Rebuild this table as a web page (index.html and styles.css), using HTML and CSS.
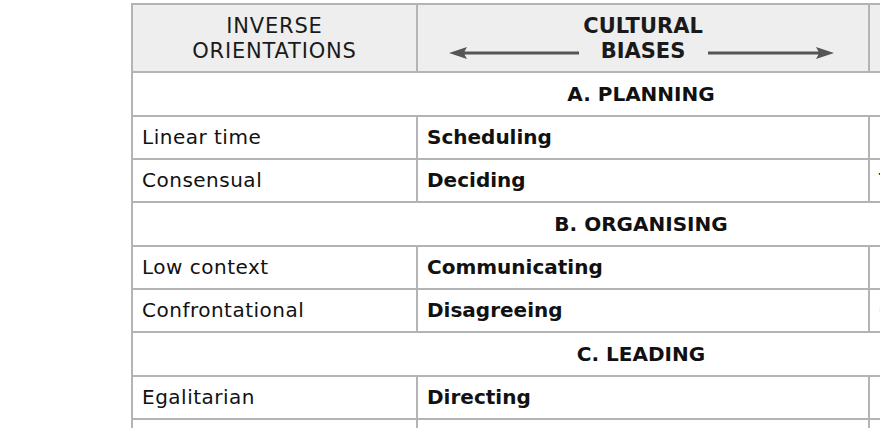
FILE: index.html
```html
<!DOCTYPE html>
<html>
<head>
<meta charset="utf-8">
<link rel="stylesheet" href="styles.css">
</head>
<body>
<div class="wrap">
<table class="grid">
  <colgroup><col class="c1"><col class="c2"><col class="c3"></colgroup>
  <tr class="head">
    <th class="h-inv">INVERSE<br>ORIENTATIONS</th>
    <th class="h-bias">
      <div class="bias">
        <svg class="arrow" width="130" height="12" viewBox="0 0 130 12"><path d="M0 6 L18 0 L15.5 4.6 L130 4.6 L130 7.4 L15.5 7.4 L18 12 Z" fill="#555"/></svg>
        <span class="bias-t">CULTURAL<br>BIASES</span>
        <svg class="arrow" width="126" height="12" viewBox="0 0 126 12"><path d="M126 6 L108 0 L110.5 4.6 L0 4.6 L0 7.4 L110.5 7.4 L108 12 Z" fill="#555"/></svg>
      </div>
    </th>
    <th class="h-opp">INVERSE<br>ORIENTATIONS</th>
  </tr>
  <tr class="section"><td colspan="3">A. PLANNING</td></tr>
  <tr class="row"><td>Linear time</td><td class="b">Scheduling</td><td>Flexible time</td></tr>
  <tr class="row"><td>Consensual</td><td class="b">Deciding</td><td>Top-down</td></tr>
  <tr class="section"><td colspan="3">B. ORGANISING</td></tr>
  <tr class="row"><td>Low context</td><td class="b">Communicating</td><td>High context</td></tr>
  <tr class="row"><td>Confrontational</td><td class="b">Disagreeing</td><td>Conflict avoidant</td></tr>
  <tr class="section"><td colspan="3">C. LEADING</td></tr>
  <tr class="row"><td>Egalitarian</td><td class="b">Directing</td><td>Hierarchical</td></tr>
  <tr class="row"><td>Task-based</td><td class="b">Trusting</td><td>Relationship-based</td></tr>
</table>
</div>
</body>
</html>
```
FILE: styles.css
```css
html, body { margin: 0; padding: 0; background: #fff; }
body { width: 880px; height: 428px; overflow: hidden; font-family: "DejaVu Sans", sans-serif; color: #111; }
.wrap { padding: 3px 0 0 131px; }
.grid { border-collapse: collapse; table-layout: fixed; width: 1018px; }
.c1 { width: 285px; }
.c2 { width: 452px; }
.c3 { width: 281px; }
.grid th, .grid td { border: 2px solid #b4b4b4; padding: 0 0 0 9px; text-align: left; vertical-align: middle; font-size: 20px; line-height: 25px; letter-spacing: 0.5px; white-space: nowrap; overflow: hidden; }
.head th { background: #eeeeee; height: 64px; padding: 2px 0 0 0; font-weight: 400; text-align: center; color: #1a1a1a; font-size: 21px; letter-spacing: 0.8px; }
.head .h-bias { font-weight: 700; letter-spacing: 0; }
.bias { display: flex; align-items: center; justify-content: center; padding-right: 4px; }
.bias-t { width: 129px; text-align: center; }
.arrow { margin-top: 28px; }
.section { height: 44px; }
.section td { text-align: center; font-weight: 700; padding: 0; letter-spacing: 0; }
.row { height: 43px; }
.grid td.b { font-weight: 700; letter-spacing: 0; }
```
